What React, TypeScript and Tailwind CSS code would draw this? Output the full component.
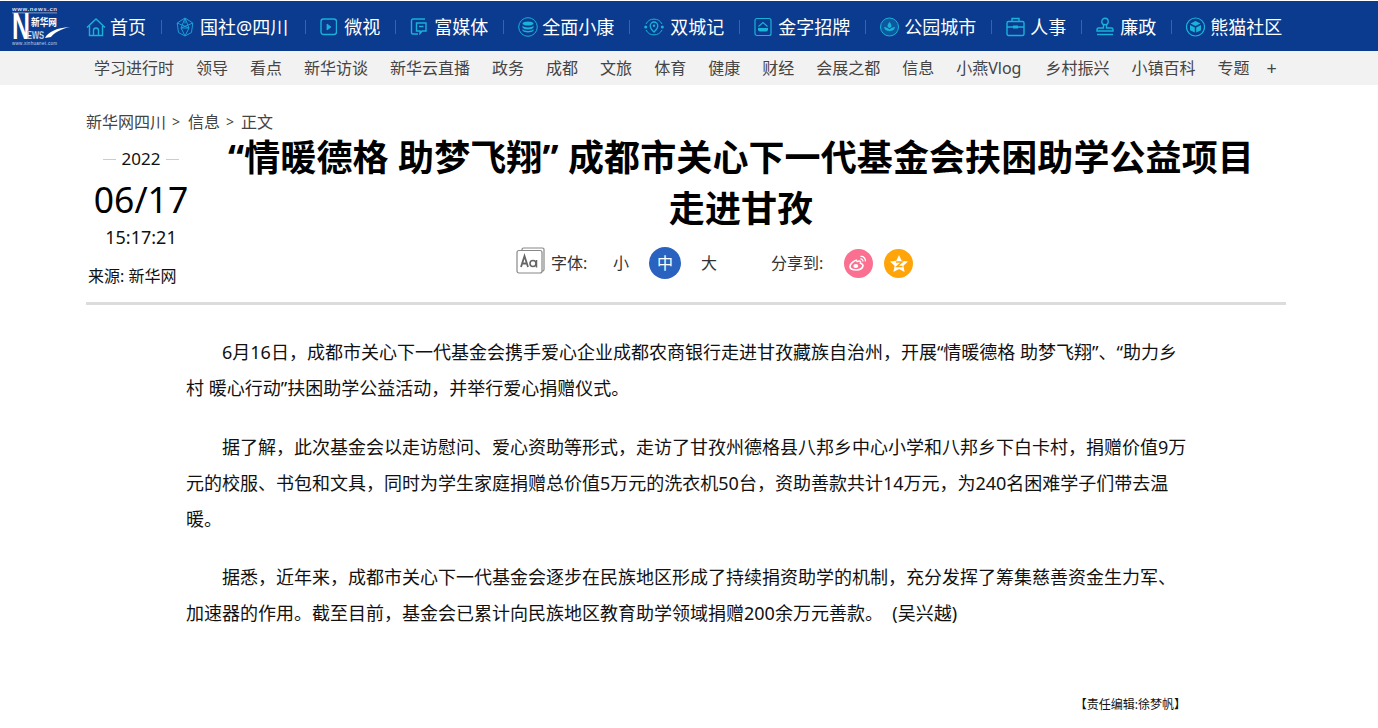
import type { ReactNode } from "react";

const FONT = "font-['Noto_Sans','Noto_Sans_CJK_SC',sans-serif]";

const Ico = ({ w = 20, children }: { w?: number; children: ReactNode }) => (
  <svg width={w} height="20" viewBox={`0 0 ${w} 20`} fill="none" stroke="#19b3d9" strokeWidth="1.4" className="shrink-0">
    {children}
  </svg>
);

const navItems: { label: string; gap: number; icon: ReactNode; w: number }[] = [
  {
    label: "首页",
    gap: 4,
    w: 20,
    icon: (
      <>
        <path d="M1 10.500 10 2l9 8.500" />
        <path d="M3.500 9v9.500h13V9" />
        <path d="M7.500 18.500v-5a2.500 2.500 0 0 1 5 0v5" />
      </>
    ),
  },
  {
    label: "国社@四川",
    gap: 6,
    w: 18,
    icon: (
      <g strokeWidth="1" stroke="#1a9fd6">
        <path d="M9 1 16.800 6l-1.300 9.500L9 19l-6.500-3.500L1.200 6Z" />
        <path d="M9 1 13 11H5ZM1.200 6 13 11M16.800 6 5 11M5 11l4 8 4-8M9 1v5.500" />
      </g>
    ),
  },
  {
    label: "微视",
    gap: 7,
    w: 17,
    icon: (
      <>
        <rect x="1" y="2" width="15.500" height="15.500" rx="2.500" />
        <path d="m7 7 4 3-4 3Z" fill="#19b3d9" strokeWidth="0.800" />
      </>
    ),
  },
  {
    label: "富媒体",
    gap: 7,
    w: 17,
    icon: (
      <>
        <path d="M15 2H3a1.500 1.500 0 0 0-1.500 1.500v12A1.500 1.500 0 0 0 3 17h5" />
        <path d="M6.500 6h9.500v8h-4l-2 2.500V14H6.500Z" />
        <path d="M9 9.500h4.500" />
      </>
    ),
  },
  {
    label: "全面小康",
    gap: 4,
    w: 20,
    icon: (
      <>
        <circle cx="10" cy="10" r="9.300" strokeWidth="1" />
        <ellipse cx="10" cy="6.500" rx="5.500" ry="2" fill="#19b3d9" stroke="none" />
        <path d="M4.500 8.500c1 2.500 10 2.500 11 0v2c-1 2.500-10 2.500-11 0Z" fill="#19b3d9" stroke="none" />
        <path d="M4.500 12c1 2.500 10 2.500 11 0v1.500c-1 2.500-10 2.500-11 0Z" fill="#19b3d9" stroke="none" />
      </>
    ),
  },
  {
    label: "双城记",
    gap: 6,
    w: 20,
    icon: (
      <g strokeWidth="1">
        <path d="M2 7a9 9 0 0 1 16 0M2 13a9 9 0 0 0 16 0" />
        <circle cx="1.700" cy="10" r="1.500" fill="#19b3d9" stroke="none" />
        <circle cx="18.300" cy="10" r="1.500" fill="#19b3d9" stroke="none" />
        <path d="M10 15s-3.800-3.500-3.800-6.200a3.800 3.800 0 0 1 7.600 0C13.800 11.500 10 15 10 15Z" strokeWidth="1.300" />
        <circle cx="10" cy="8.800" r="1.200" fill="#19b3d9" stroke="none" />
      </g>
    ),
  },
  {
    label: "金字招牌",
    gap: 6,
    w: 18,
    icon: (
      <>
        <rect x="1" y="1.500" width="16" height="17" rx="2" strokeWidth="1.200" />
        <path d="M4.500 9.500 9 5.500l4.500 4" strokeWidth="1.100" />
        <path d="M4 11h10v1.500a2 2 0 0 1-2 2H6a2 2 0 0 1-2-2Z" fill="#19b3d9" stroke="none" />
      </>
    ),
  },
  {
    label: "公园城市",
    gap: 5,
    w: 19,
    icon: (
      <>
        <circle cx="9.500" cy="10" r="9" strokeWidth="1" fill="#19b3d9" fillOpacity="0.25" />
        <path d="M9.500 5c1.500 1.500 2 3 2 4.500-.7.800-1.300 1.200-2 1.500-.7-.3-1.300-.7-2-1.500 0-1.500.5-3 2-4.500Z" fill="#19b3d9" stroke="none" />
        <path d="M4 10c2 0 4 1 5.500 2.500C11 11 13 10 15 10c-.5 2.500-2 4-5.500 4S4.500 12.500 4 10Z" fill="#19b3d9" stroke="none" />
      </>
    ),
  },
  {
    label: "人事",
    gap: 5,
    w: 19,
    icon: (
      <>
        <rect x="1" y="4.500" width="17" height="14" rx="1.500" />
        <path d="M6 4.500V1.500h7v3M1 10h17" />
        <rect x="7" y="8.500" width="5" height="3" fill="#19b3d9" stroke="none" />
      </>
    ),
  },
  {
    label: "廉政",
    gap: 6,
    w: 18,
    icon: (
      <>
        <circle cx="9" cy="4.500" r="3.200" />
        <path d="M7.500 7.500v3.500H2.500c-1 0-1.500.7-1.500 1.500v1.500h16v-1.500c0-.8-.5-1.500-1.500-1.500h-5V7.500" />
        <path d="M1 17.500h16" />
      </>
    ),
  },
  {
    label: "熊猫社区",
    gap: 5,
    w: 19,
    icon: (
      <>
        <circle cx="9.500" cy="10" r="9" strokeWidth="1.200" />
        <path d="m9.500 4 5 2.500-5 2.500-5-2.500Z" fill="#19b3d9" stroke="none" />
        <path d="M4 8l4.800 2.400v5.200L4 13.200ZM15 8l-4.800 2.400v5.200l4.800-2.400Z" fill="#19b3d9" stroke="none" />
      </>
    ),
  },
];

const subItems = [
  "学习进行时",
  "领导",
  "看点",
  "新华访谈",
  "新华云直播",
  "政务",
  "成都",
  "文旅",
  "体育",
  "健康",
  "财经",
  "会展之都",
  "信息",
  "小燕Vlog",
  "乡村振兴",
  "小镇百科",
  "专题",
];

const Logo = () => (
  <svg width="60" height="40" viewBox="0 0 60 40" className="shrink-0" fontFamily="'Liberation Sans',sans-serif" fill="#fff">
    <text x="0" y="5" fontSize="6" fontWeight="700" fill="#d5dfee" textLength="45">www.news.cn</text>
    <rect x="0" y="6.500" width="45" height="0.800" fill="#9fb3d4" />
    <text x="0" y="33" fontSize="36" fontWeight="700" textLength="18" lengthAdjust="spacingAndGlyphs">N</text>
    <text x="19" y="20" fontSize="10" fontWeight="700" fontFamily="'Noto Sans CJK SC',sans-serif" textLength="26" lengthAdjust="spacingAndGlyphs">新华网</text>
    <text x="15" y="33" fontSize="10.500" fontWeight="700" textLength="17" lengthAdjust="spacingAndGlyphs" stroke="#0a3b8e" strokeWidth="0.300">EWS</text>
    <path d="M33 32c3-6 11-10 25-11-9 2-16 6-19 10Z" />
    <text x="0" y="38.500" fontSize="4.500" fill="#c5d2e6" textLength="45">www.xinhuanet.com</text>
  </svg>
);

export default function App() {
  return (
    <div className={`${FONT} min-h-[728px] bg-white text-[#111]`}>
      <div className="h-[51px] border-t border-white bg-[#0a3b8e] pl-[12px] flex items-center">
        <Logo />
        <ul className="ml-[14px] pt-[1px] flex items-center">
          {navItems.map((item, i) => (
            <li key={item.label} className={i === 1 ? "mr-[2px] flex items-center" : "flex items-center"}>
              {i > 0 && <span className="mx-[14.500px] h-[14px] w-px bg-[#1a72a8]" />}
              <span className="flex items-center" style={{ gap: item.gap }}>
                <Ico w={item.w}>{item.icon}</Ico>
                <span className="text-[18px] leading-[26px] text-white">{item.label}</span>
              </span>
            </li>
          ))}
        </ul>
      </div>

      <div className="h-[34px] bg-[#f2f2f2] pl-[94px] flex items-center gap-[22px] text-[16px] text-[#444]">
        {subItems.map((s) => (
          <a key={s} className={s === "小燕Vlog" ? "mr-[2px] w-max whitespace-nowrap" : "w-max whitespace-nowrap"}>{s}</a>
        ))}
        <span className="-ml-[5px] text-[18px]">+</span>
      </div>

      <div className="ml-[86px] w-[1200px]">
        <div className="pt-[26px] flex items-center text-[16px] leading-[22px] text-[#444]">
          <span>新华网四川</span>
          <span className="ml-[6px] mr-[8px] text-[14px]">&gt;</span>
          <span>信息</span>
          <span className="ml-[6px] mr-[7px] text-[14px]">&gt;</span>
          <span>正文</span>
        </div>

        <div className="h-[169px] border-b-[3px] border-[#dcdcdc] box-content flex">
          <div className="w-[110px] shrink-0 flex flex-col items-center">
            <div className="mt-[14px] flex items-center gap-[6px] text-[17px] leading-[24px]">
              <span className="h-px w-[13px] bg-[#ccc]" />
              2022
              <span className="h-px w-[13px] bg-[#ccc]" />
            </div>
            <div className="mt-[6px] text-[35.500px] leading-[44px] text-black">06/17</div>
            <div className="mt-[4px] text-[18px] leading-[24px]">15:17:21</div>
            <div className="mt-[16px] ml-[2px] self-start whitespace-nowrap text-[16px] leading-[22px]">来源: 新华网</div>
          </div>
          <div className="flex-1 flex flex-col items-center">
            <h1 className="mt-[-1px] w-[1040px] text-center text-[36px] font-bold leading-[51px] tracking-[0.1px] text-black">
              “情暖德格 助梦飞翔” 成都市关心下一代基金会扶困助学公益项目走进甘孜
            </h1>
            <div className="mt-[13px] self-start ml-[320px] flex items-center text-[16px] text-[#333]">
              <svg width="30" height="28" viewBox="0 0 30 28" fill="none" stroke="#888" strokeWidth="1.200" className="-translate-y-[2px]">
                <path d="M6 3V2.500a1.500 1.500 0 0 1 1.500-1.500h19A1.500 1.500 0 0 1 28 2.500v20a1.500 1.500 0 0 1-1.500 1.500H26" />
                <rect x="1" y="3.500" width="25" height="22.500" rx="2" fill="#fff" />
                <path d="m5 20 3.500-11 3.500 11M6 16.500h5" strokeWidth="1.800" stroke="#666" />
                <circle cx="17" cy="16.500" r="3" strokeWidth="1.600" stroke="#666" />
                <path d="M20.500 13v7.500" strokeWidth="1.500" stroke="#666" />
              </svg>
              <span className="ml-[5px] w-[62px]">字体:</span>
              <span>小</span>
              <span className="ml-[20px] h-[32px] w-[32px] rounded-full bg-[#2a62c0] text-white flex items-center justify-center">中</span>
              <span className="ml-[20px]">大</span>
              <span className="ml-[54px] w-[73px]">分享到:</span>
              <span className="h-[29px] w-[29px] rounded-full bg-[#fb6f90] flex items-center justify-center">
                <svg width="19" height="16" viewBox="0 0 19 16" fill="none" stroke="#fff">
                  <path d="M8 5c-3 .7-7 3.500-7 6.500C1 14 4 15 7.500 15c3.500 0 6.500-2 6.500-4.500 0-1.500-1.500-2-2.500-2.300.5-1.700-.5-3-4-1.500" strokeWidth="1.700" />
                  <ellipse cx="6.800" cy="11" rx="2.500" ry="2" fill="#fff" stroke="none" />
                  <path d="M11.500 1.500c3-.5 5.500 2 4.800 5M11.500 4c1.500-.3 2.700 1 2.300 2.500" strokeWidth="1.300" />
                </svg>
              </span>
              <span className="ml-[11px] h-[29px] w-[29px] rounded-full bg-[#ffa50a] flex items-center justify-center">
                <svg width="20" height="19" viewBox="0 0 20 19">
                  <path d="m10 1 2.700 5.700 6.300.8-4.600 4.300 1.200 6.200L10 15l-5.600 3 1.200-6.200L1 7.500l6.300-.8Z" fill="#fff" />
                  <path d="M7 8h6l-5 4.500h5.500" fill="none" stroke="#ffa50a" strokeWidth="1.500" />
                </svg>
              </span>
            </div>
          </div>
        </div>

        <div className="mt-[29px] ml-[100px] w-[1001px] text-[18px] leading-[36px] text-[#111] [&>p]:mb-[22.500px] [&>p]:indent-[36px]">
          <p>6月16日，成都市关心下一代基金会携手爱心企业成都农商银行走进甘孜藏族自治州，开展“情暖德格 助梦飞翔”、“助力乡村 暖心行动”扶困助学公益活动，并举行爱心捐赠仪式。</p>
          <p>据了解，此次基金会以走访慰问、爱心资助等形式，走访了甘孜州德格县八邦乡中心小学和八邦乡下白卡村，捐赠价值9万元的校服、书包和文具，同时为学生家庭捐赠总价值5万元的洗衣机50台，资助善款共计14万元，为240名困难学子们带去温暖。</p>
          <p>据悉，近年来，成都市关心下一代基金会逐步在民族地区形成了持续捐资助学的机制，充分发挥了筹集慈善资金生力军、加速器的作用。截至目前，基金会已累计向民族地区教育助学领域捐赠200余万元善款。&nbsp;&nbsp;(吴兴越)</p>
        </div>
        <div className="mt-[66px] ml-[100px] w-[1000px] text-right text-[12px] leading-[16px]">【责任编辑:徐梦帆】</div>
      </div>
    </div>
  );
}
